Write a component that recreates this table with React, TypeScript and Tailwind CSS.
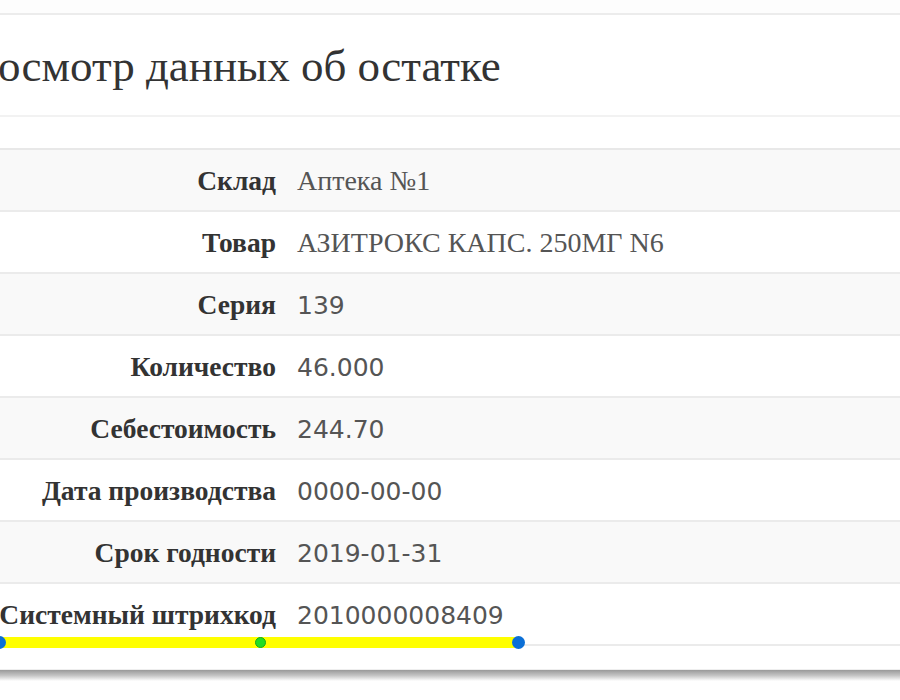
import React from "react";

const serif = { fontFamily: '"Liberation Serif", "Times New Roman", serif' };

type Row = { label: string; value: string; serifValue?: boolean };

const rows: Row[] = [
  { label: "Склад", value: "Аптека №1", serifValue: true },
  { label: "Товар", value: "АЗИТРОКС КАПС. 250МГ N6", serifValue: true },
  { label: "Серия", value: "139" },
  { label: "Количество", value: "46.000" },
  { label: "Себестоимость", value: "244.70" },
  { label: "Дата производства", value: "0000-00-00" },
  { label: "Срок годности", value: "2019-01-31" },
  { label: "Системный штрихкод", value: "2010000008409" },
];

export default function App() {
  return (
    <div className="relative w-[900px] h-[700px] overflow-hidden bg-white">
      <div className="ml-[-57px] w-[1000px]">
        <div className="h-[13px] bg-[#fdfdfd]" />
        <div className="border-t-2 border-[#ececec]" />
        <div className="h-[102px] flex items-center bg-white border-b-2 border-[#f2f2f2]">
          <h1
            className="text-[45px] leading-none text-[#333] font-normal pt-[2px]"
            style={serif}
          >
            Просмотр данных об остатке
          </h1>
        </div>
        <div className="h-[31px] bg-white" />
        <div className="border-t-2 border-[#e8e8e8]">
          {rows.map((r, i) => (
            <div
              key={r.label}
              className={`grid grid-cols-[343px_1fr] h-[62px] border-b-2 border-[#ebebeb] ${
                i % 2 === 0 ? "bg-[#f9f9f9]" : "bg-white"
              }`}
            >
              <div
                className="flex items-center justify-end pr-[10px] pt-[2px] text-[27.5px] leading-none font-bold text-[#333] whitespace-nowrap"
                style={serif}
              >
                {r.label}
              </div>
              <div
                className={`flex items-center pl-[11px] pt-[2px] leading-none text-[#555] whitespace-nowrap ${
                  r.serifValue
                    ? "text-[28px] font-['Liberation_Serif',serif]"
                    : "text-[25px] font-['DejaVu_Sans',sans-serif]"
                }`}
              >
                {r.value}
              </div>
            </div>
          ))}
        </div>
        <div className="h-[24px] bg-white border-b border-[#eeeeee]" />
        <div className="h-[11px] bg-gradient-to-b from-[#999999] via-[#c4c4c4] to-white" />
      </div>

      {/* annotation overlay */}
      <div className="absolute left-0 top-[637px] w-[518px] h-[11px] bg-[#ffff00]" />
      <div className="absolute left-[-7px] top-[636px] w-[13px] h-[13px] rounded-full bg-[#0b6fd6]" />
      <div className="absolute left-[512px] top-[636px] w-[13px] h-[13px] rounded-full bg-[#0b6fd6]" />
      <div className="absolute left-[255px] top-[637px] w-[11px] h-[11px] rounded-full bg-[#22dd22] border border-[#18a818]" />
    </div>
  );
}
